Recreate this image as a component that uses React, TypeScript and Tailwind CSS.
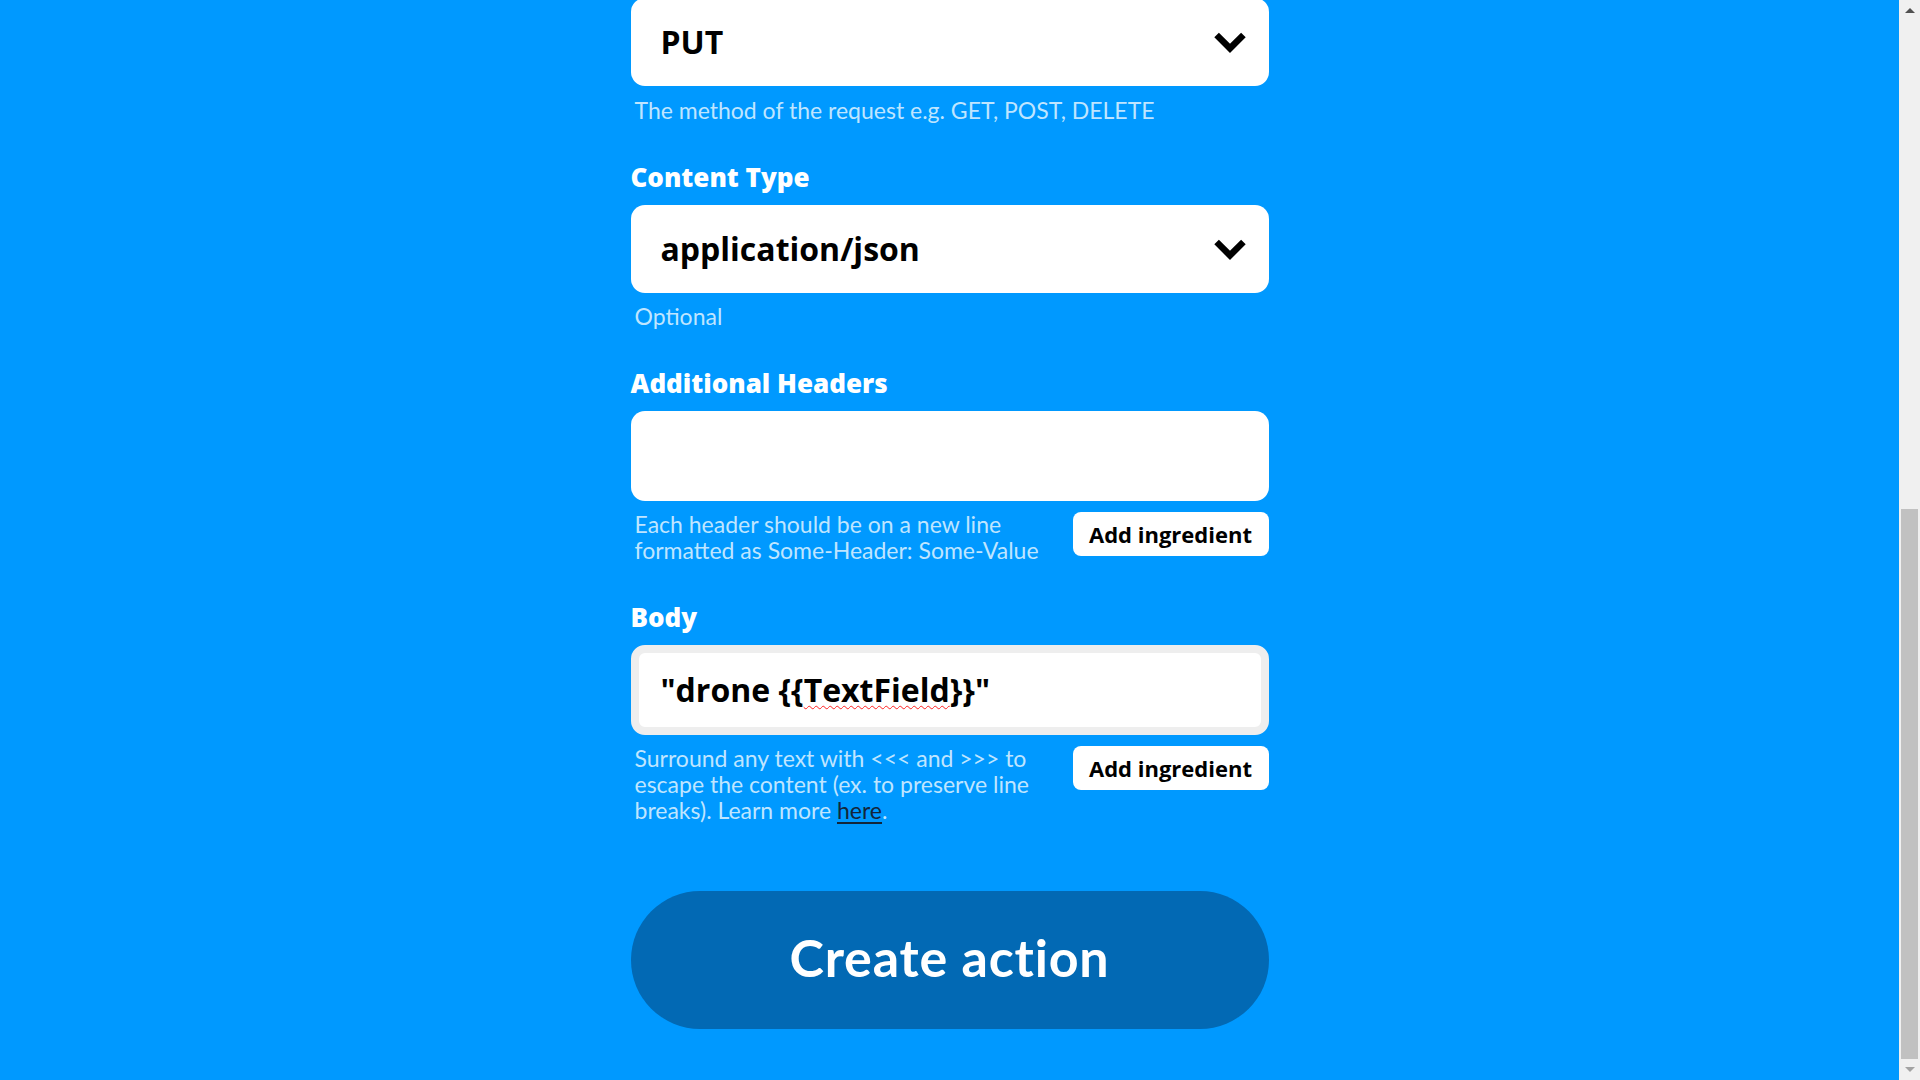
import React from "react";

const lato = { fontFamily: "Lato, 'Open Sans', sans-serif" };
const OPEN = "font-['Open_Sans',Lato,sans-serif]";

function Chevron() {
  return (
    <svg width="32" height="23" viewBox="0 0 32 23" className="shrink-0">
      <polyline points="2.6,4 16,17.4 29.4,4" fill="none" stroke="#000" strokeWidth="6.5" strokeLinejoin="miter" />
    </svg>
  );
}

function Select({ value }: { value: string }) {
  return (
    <div className="flex h-[88px] items-center justify-between rounded-[14px] bg-white pl-[30px] pr-[23px]">
      <span className={OPEN + " text-[32px] font-bold leading-[36px] text-black"}>{value}</span>
      <Chevron />
    </div>
  );
}

function Label({ children }: { children: React.ReactNode }) {
  return (
    <div className={OPEN + " mb-[12px] text-[26px] font-extrabold leading-[32px] text-white"}>{children}</div>
  );
}

function Helper({ children, className = "" }: { children: React.ReactNode; className?: string }) {
  return (
    <div className={"whitespace-nowrap pl-[4px] text-[23px] leading-[26px] text-[#bfe5ff] " + className}>{children}</div>
  );
}

function AddIngredient() {
  return (
    <button
      className={
        OPEN +
        " flex h-[44px] w-[196px] shrink-0 items-center justify-center rounded-[8px] bg-white text-[22px] font-bold text-black"
      }
    >
      Add ingredient
    </button>
  );
}

export default function App() {
  return (
    <div className="flex h-[1080px] w-full overflow-hidden" style={lato}>
      <main className="flex-1 bg-[#0099ff]">
        <div className="mx-auto mt-[-2px] w-[638px]">
          <Select value="PUT" />
          <Helper className="mt-[11px]">The method of the request e.g. GET, POST, DELETE</Helper>

          <div className="mt-[38px]">
            <Label>Content Type</Label>
            <Select value="application/json" />
            <Helper className="mt-[10px]">Optional</Helper>
          </div>

          <div className="mt-[38px]">
            <Label>Additional Headers</Label>
            <div className="h-[90px] rounded-[14px] bg-white" />
            <div className="mt-[10px] flex items-start justify-between">
              <Helper>
                Each header should be on a new line
                <br />
                formatted as Some-Header: Some-Value
              </Helper>
              <div className="mt-[1px]">
                <AddIngredient />
              </div>
            </div>
          </div>

          <div className="mt-[38px]">
            <Label>Body</Label>
            <div className="flex h-[90px] items-center rounded-[14px] border-[8px] border-[#eeeeee] bg-white pl-[22px]">
              <span className={OPEN + " text-[32px] font-bold leading-[36px] text-black"}>
                "drone {"{{"}
                <span className="underline decoration-wavy decoration-[#ff2020] decoration-1 underline-offset-[3px]">TextField</span>
                {"}}"}"
              </span>
            </div>
            <div className="mt-[10px] flex items-start justify-between">
              <Helper>
                Surround any text with &lt;&lt;&lt; and &gt;&gt;&gt; to
                <br />
                escape the content (ex. to preserve line
                <br />
                breaks). Learn more <a className="text-[#13263a] underline underline-offset-[3px]">here</a>.
              </Helper>
              <div className="mt-[1px]">
                <AddIngredient />
              </div>
            </div>
          </div>

          <button className="mt-[68px] flex h-[138px] w-full items-center justify-center rounded-full bg-[#0269b4] pb-[6px] text-[52px] font-bold tracking-[0.8px] text-white">
            Create action
          </button>
        </div>
      </main>

      <div className="flex w-[21px] flex-col bg-[#f0f0f0]">
        <div className="flex h-[21px] items-center justify-center">
          <div className="h-0 w-0 border-x-[5px] border-b-[5px] border-x-transparent border-b-[#505050]" />
        </div>
        <div className="flex flex-1 flex-col px-[2px]">
          <div className="h-[488px]" />
          <div className="flex-1 bg-[#c1c1c1]" />
        </div>
        <div className="flex h-[21px] items-center justify-center">
          <div className="h-0 w-0 border-x-[5px] border-t-[5px] border-x-transparent border-t-[#a3a3a3]" />
        </div>
      </div>
    </div>
  );
}
